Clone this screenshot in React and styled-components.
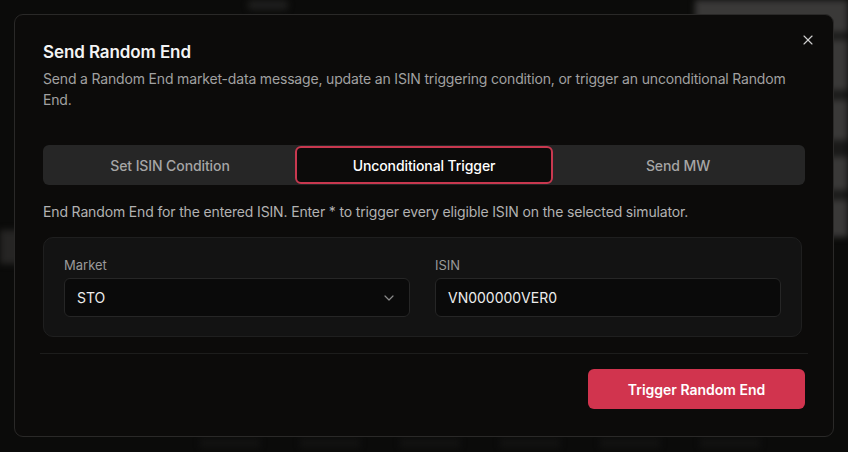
import React from "react";
import styled, { createGlobalStyle } from "styled-components";
import { X, ChevronDown } from "lucide-react";

const Global = createGlobalStyle`
  * { box-sizing: border-box; }
  html, body { margin: 0; padding: 0; background: #0b0b0a; }
  body { font-family: Inter, "Noto Sans", sans-serif; -webkit-font-smoothing: antialiased; }
`;

const Page = styled.div`
  position: relative;
  width: 848px;
  height: 452px;
  overflow: hidden;
  background: #0b0b0a;
`;

const Behind = styled.div`
  display: flex;
  height: 100%;
  filter: blur(3px);
`;

const Sidebar = styled.div`
  width: 160px;
  display: flex;
  flex-direction: column;
  padding-top: 230px;
`;

const SideItem = styled.div`
  height: 34px;
  background: ${(p) => (p.$active ? "#262524" : "transparent")};
`;

const Main = styled.div`
  flex: 1;
  display: flex;
  flex-direction: column;
`;

const TopBar = styled.div`
  height: 12px;
  display: flex;
  padding-left: 88px;
`;

const TopChip = styled.div`
  width: 40px;
  height: 10px;
  background: #1e1e1d;
  border-radius: 4px;
`;

const TableArea = styled.div`
  display: flex;
  justify-content: flex-end;
`;

const Table = styled.div`
  width: 153px;
  display: flex;
  flex-direction: column;
  margin-top: -12px;
`;

const TRow = styled.div`
  height: ${(p) => p.$h}px;
  background: ${(p) => (p.$dark ? "#1a1a19" : "#3a3938")};
`;

const Bottom = styled.div`
  margin-top: auto;
  height: 14px;
  display: flex;
  gap: 40px;
  padding-left: 40px;
`;

const BottomChip = styled.div`
  width: 60px;
  height: 10px;
  background: #121211;
`;

const Overlay = styled.div`
  position: absolute;
  inset: 0;
  padding: 14px;
  display: flex;
  align-items: flex-start;
  justify-content: flex-start;
`;

const Modal = styled.div`
  position: relative;
  width: 820px;
  height: 423px;
  background: #0c0b0a;
  border: 1px solid #2a2928;
  border-radius: 9px;
  padding: 25px 28px 0 28px;
  display: flex;
  flex-direction: column;
  color: #f2f2f2;
`;

const CloseBtn = styled.button`
  position: absolute;
  top: 13px;
  right: 13px;
  width: 24px;
  height: 24px;
  display: flex;
  align-items: center;
  justify-content: center;
  background: none;
  border: none;
  padding: 0;
  color: #d0d0d0;
`;

const Title = styled.h2`
  margin: 0;
  font-size: 17px;
  line-height: 24px;
  font-weight: 600;
  color: #f4f4f4;
  letter-spacing: -0.1px;
`;

const Desc = styled.p`
  margin: 4px 0 0;
  font-size: 14px;
  line-height: 21px;
  color: #a1a1a1;
  letter-spacing: -0.17px;
`;

const Tabs = styled.div`
  margin-top: 35px;
  height: 40px;
  background: #262626;
  border-radius: 6px;
  display: grid;
  grid-template-columns: repeat(3, 1fr);
  padding: 0;
`;

const Tab = styled.div`
  display: flex;
  align-items: center;
  justify-content: center;
  font-size: 14px;
  font-weight: 500;
  letter-spacing: -0.1px;
  color: ${(p) => (p.$active ? "#ffffff" : "#a5a5a5")};
  background: ${(p) => (p.$active ? "#0c0b0a" : "transparent")};
  border: ${(p) => (p.$active ? "2px solid #c8384f" : "none")};
  border-radius: 6px;
  margin: ${(p) => (p.$active ? "1px -2px" : "0")};
`;

const Help = styled.p`
  margin: 17px 0 0;
  font-size: 14px;
  line-height: 20px;
  color: #b2b2b2;
  letter-spacing: -0.15px;
`;

const Card = styled.div`
  margin-top: 15px;
  width: 759px;
  height: 100px;
  background: #131313;
  border: 1px solid #1f1f1f;
  border-radius: 10px;
  padding: 19px 20px;
  display: grid;
  grid-template-columns: 346px 346px;
  column-gap: 25px;
`;

const Field = styled.div`
  display: flex;
  flex-direction: column;
`;

const Label = styled.label`
  font-size: 13px;
  line-height: 16px;
  color: #9a9a9a;
  margin-bottom: 5px;
`;

const InputBox = styled.div`
  height: 39px;
  background: #0a0a0a;
  border: 1px solid #262626;
  border-radius: 6px;
  padding: 0 12px;
  display: flex;
  align-items: center;
  justify-content: space-between;
  font-size: 14px;
  color: #ededed;
`;

const Divider = styled.div`
  margin: 16px -3px 0 -3px;
  height: 1px;
  background: #1d1d1c;
`;

const Footer = styled.div`
  margin-top: 15px;
  display: flex;
  justify-content: flex-end;
`;

const Primary = styled.button`
  width: 217px;
  height: 40px;
  background: #d1344e;
  color: #fff;
  border: none;
  border-radius: 6px;
  font-family: inherit;
  font-size: 14px;
  font-weight: 600;
`;

export default function App() {
  const rows = [
    [32, false], [8, true], [50, false], [10, true], [40, false],
    [17, true], [33, false], [10, true], [37, false],
  ];
  return (
    <Page>
      <Global />
      <Behind>
        <Sidebar>
          <SideItem $active />
        </Sidebar>
        <Main>
          <TopBar>
            <TopChip />
          </TopBar>
          <TableArea>
            <Table>
              {rows.map(([h, d], i) => (
                <TRow key={i} $h={h} $dark={d} />
              ))}
            </Table>
          </TableArea>
          <Bottom>
            {[0, 1, 2, 3, 4, 5].map((i) => (
              <BottomChip key={i} />
            ))}
          </Bottom>
        </Main>
      </Behind>
      <Overlay>
        <Modal>
          <CloseBtn aria-label="Close">
            <X size={16} strokeWidth={1.7} />
          </CloseBtn>
          <Title>Send Random End</Title>
          <Desc>
            Send a Random End market-data message, update an ISIN triggering condition, or trigger an unconditional Random End.
          </Desc>
          <Tabs>
            <Tab>Set ISIN Condition</Tab>
            <Tab $active>Unconditional Trigger</Tab>
            <Tab>Send MW</Tab>
          </Tabs>
          <Help>
            End Random End for the entered ISIN. Enter * to trigger every eligible ISIN on the selected simulator.
          </Help>
          <Card>
            <Field>
              <Label>Market</Label>
              <InputBox>
                STO
                <ChevronDown size={16} color="#8a8a8a" strokeWidth={1.8} />
              </InputBox>
            </Field>
            <Field>
              <Label>ISIN</Label>
              <InputBox>VN000000VER0</InputBox>
            </Field>
          </Card>
          <Divider />
          <Footer>
            <Primary>Trigger Random End</Primary>
          </Footer>
        </Modal>
      </Overlay>
    </Page>
  );
}
